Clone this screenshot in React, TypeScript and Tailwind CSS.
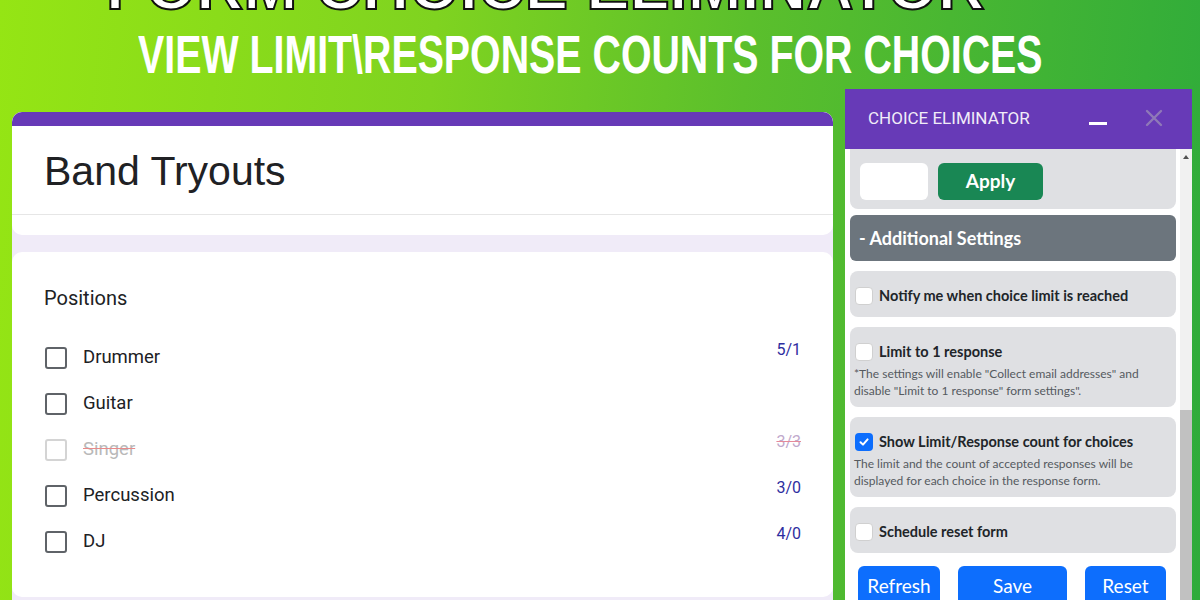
import React from "react";

const choices = [
  { label: "Drummer", count: "5/1", full: false },
  { label: "Guitar", count: "", full: false },
  { label: "Singer", count: "3/3", full: true },
  { label: "Percussion", count: "3/0", full: false },
  { label: "DJ", count: "4/0", full: false },
];

function SmallBox({ checked = false }: { checked?: boolean }) {
  if (checked) {
    return (
      <span className="flex h-[18px] w-[18px] shrink-0 items-center justify-center rounded-[4px] bg-[#0d6efd]">
        <svg width="12" height="12" viewBox="0 0 12 12" fill="none">
          <path d="M2.5 6.2 L5 8.6 L9.6 3.4" stroke="white" strokeWidth="2" strokeLinecap="round" strokeLinejoin="round" />
        </svg>
      </span>
    );
  }
  return <span className="h-[18px] w-[18px] shrink-0 rounded-[4px] border border-[#d0d0d0] bg-white" />;
}

function SettingBox({
  title,
  desc,
  checked,
}: {
  title: string;
  desc?: string[];
  checked?: boolean;
}) {
  return (
    <div
      className={`shrink-0 rounded-[8px] bg-[#dfe0e3] px-[4px] ${
        desc ? "h-[80px] pt-[16px]" : "h-[46px] pt-[16px]"
      }`}
    >
      <div className="flex items-center gap-[6px] pl-[1px]">
        <SmallBox checked={checked} />
        <span className="text-[14.5px] font-bold leading-[18px] text-[#212529]">{title}</span>
      </div>
      {desc && (
        <div className="mt-[4px] text-[12px] leading-[17px] text-[#555a5f]">
          {desc.map((d) => (
            <div key={d}>{d}</div>
          ))}
        </div>
      )}
    </div>
  );
}

export default function App() {
  return (
    <div className="h-[600px] w-[1200px] overflow-hidden bg-[linear-gradient(95deg,#95e514_0%,#7fd320_35%,#5bbf2c_60%,#2eab3b_100%)]">
      {/* banner heading */}
      <div className="flex h-[89px] flex-col font-['Liberation_Sans',Arial,sans-serif]">
        <div className="-mt-[46px] ml-[106px] h-[65px] whitespace-nowrap text-[65px] font-bold leading-[65px] text-white [-webkit-text-stroke:2px_#111]">
          FORM CHOICE ELIMINATOR
        </div>
        <div className="ml-[138px] mt-[9px] h-[53px] whitespace-nowrap">
          <span className="inline-block origin-left scale-x-[0.742] text-[53px] font-bold leading-[53px] text-white">
            VIEW LIMIT\RESPONSE COUNTS FOR CHOICES
          </span>
        </div>
      </div>

      <div className="flex items-start">
        {/* form preview */}
        <div className="ml-[12px] mt-[23px] h-[488px] w-[821px] rounded-t-[10px] bg-[#f0ebf8]">
          <div className="overflow-hidden rounded-[10px] bg-white">
            <div className="h-[14px] bg-[#673ab7]" />
            <div className="px-[32px] pt-[21px] font-['Liberation_Sans',Arial,sans-serif] text-[41px] leading-[48px] text-[#202124]">
              Band Tryouts
            </div>
            <div className="mt-[19px] h-px bg-[#e6e6e6]" />
            <div className="h-[20px]" />
          </div>

          <div className="mt-[17px] rounded-[10px] bg-white px-[32px] pb-[32px] pt-[34px] font-['Roboto',sans-serif]">
            <div className="text-[20px] leading-[24px] text-[#202124]">Positions</div>
            <div className="mt-[25px]">
              {choices.map((c) => (
                <div key={c.label} className="flex h-[46px] items-center">
                  <span
                    className={`ml-[1px] h-[22px] w-[22px] rounded-[3px] border-2 ${
                      c.full ? "border-[#d4d4d4]" : "border-[#5f6368]"
                    }`}
                  />
                  <span
                    className={`ml-[16px] text-[18.5px] ${
                      c.full
                        ? "text-[#b9b9b9] line-through decoration-[#e88a8a]"
                        : "text-[#202124]"
                    }`}
                  >
                    {c.label}
                  </span>
                  {c.count && (
                    <span
                      className={`mb-[16px] ml-auto text-[16px] ${
                        c.full
                          ? "text-[#c0a8cc] line-through decoration-[#e58a9a]"
                          : "text-[#2e2ea0]"
                      }`}
                    >
                      {c.count}
                    </span>
                  )}
                </div>
              ))}
            </div>
          </div>
        </div>

        {/* extension panel */}
        <div className="ml-[12px] flex h-[511px] w-[347px] flex-col bg-white">
          <div className="flex h-[60px] shrink-0 items-center bg-[#673ab7] pl-[23px] font-['Roboto',sans-serif]">
            <span className="text-[17px] text-[#f1ecf8]">CHOICE ELIMINATOR</span>
            <span className="ml-[59px] mt-[9px] h-[2.5px] w-[18px] bg-white" />
            <svg className="ml-[38px] -mt-[3px]" width="18" height="18" viewBox="0 0 18 18">
              <path d="M2 2 L16 16 M16 2 L2 16" stroke="#8f78b8" strokeWidth="2.4" strokeLinecap="round" />
            </svg>
          </div>

          <div className="flex min-h-0 flex-1 overflow-hidden font-['Lato',sans-serif]">
            <div className="flex w-[331px] shrink-0 flex-col gap-[10px] pl-[5px]">
              <div className="flex h-[60px] shrink-0 items-end gap-[10px] rounded-b-[8px] bg-[#dfe0e3] px-[10px] pb-[9px]">
                <div className="h-[37px] w-[68px] rounded-[6px] bg-white" />
                <div className="flex h-[37px] w-[105px] items-center justify-center rounded-[6px] bg-[#198754] text-[19px] font-bold text-white">
                  Apply
                </div>
              </div>
              <div className="-mt-[4px] flex h-[46px] shrink-0 items-center rounded-[6px] bg-[#6c757d] pl-[9px] text-[18px] font-bold text-white">
                - Additional Settings
              </div>
              <SettingBox title="Notify me when choice limit is reached" />
              <SettingBox
                title="Limit to 1 response"
                desc={[
                  '*The settings will enable "Collect email addresses" and',
                  'disable "Limit to 1 response" form settings".',
                ]}
              />
              <SettingBox
                title="Show Limit/Response count for choices"
                checked
                desc={[
                  "The limit and the count of accepted responses will be",
                  "displayed for each choice in the response form.",
                ]}
              />
              <SettingBox title="Schedule reset form" />
              <div className="mt-[3px] flex shrink-0 pl-[8px]">
                <div className="flex h-[40px] w-[82px] items-center justify-center rounded-[6px] bg-[#0d6efd] text-[19px] text-white">
                  Refresh
                </div>
                <div className="ml-[18px] flex h-[40px] w-[109px] items-center justify-center rounded-[6px] bg-[#0d6efd] text-[19px] text-white">
                  Save
                </div>
                <div className="ml-[18px] flex h-[40px] w-[81px] items-center justify-center rounded-[6px] bg-[#0d6efd] text-[19px] text-white">
                  Reset
                </div>
              </div>
            </div>
            <div className="ml-[4px] flex w-[12px] shrink-0 flex-col bg-[#f1f1f1]">
              <div className="flex h-[16px] items-center justify-center">
                <span className="h-0 w-0 border-x-[3px] border-b-[4px] border-x-transparent border-b-[#505050]" />
              </div>
              <div className="h-[245px]" />
              <div className="flex-1 bg-[#c1c1c1]" />
            </div>
          </div>
        </div>
      </div>
    </div>
  );
}
